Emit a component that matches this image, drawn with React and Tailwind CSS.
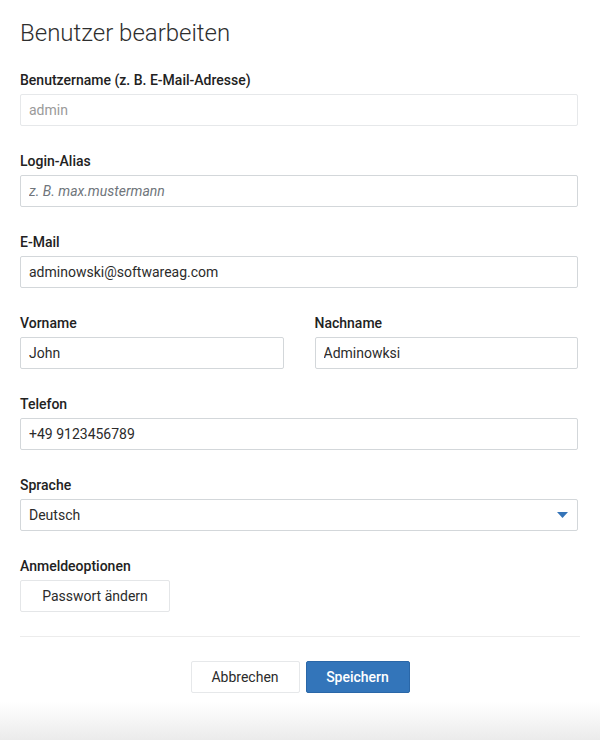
import React from "react";

const font = { fontFamily: "Roboto, 'Liberation Sans', sans-serif" };

function Field({ label, children, className = "" }) {
  return (
    <div className={"flex flex-col " + className}>
      <label className="text-sm leading-5 font-medium text-[#222] mb-1">{label}</label>
      {children}
    </div>
  );
}

function TextInput({ value, placeholder, disabled }) {
  return (
    <input
      type="text"
      defaultValue={value}
      placeholder={placeholder}
      disabled={disabled}
      className={
        "h-8 w-full rounded-[2px] border px-2 text-sm outline-none " +
        (disabled
          ? "border-[#e6e8ea] bg-white text-[#9a9a9a]"
          : "border-[#d3d7da] bg-white text-[#2b2b2b] placeholder:italic placeholder:text-[#6f757b]")
      }
    />
  );
}

export default function App() {
  return (
    <div className="flex h-[740px] w-[600px] flex-col bg-white" style={font}>
      <div className="px-5 pt-[17px]">
        <h1 className="text-2xl leading-8 font-light text-[#2e2e2e]">Benutzer bearbeiten</h1>

        <div className="mt-[21px] flex flex-col gap-[25px] pr-[2px]">
          <Field label="Benutzername (z. B. E-Mail-Adresse)">
            <TextInput value="admin" disabled />
          </Field>
          <Field label="Login-Alias">
            <TextInput placeholder="z. B. max.mustermann" />
          </Field>
          <Field label="E-Mail">
            <TextInput value="adminowski@softwareag.com" />
          </Field>
          <div className="grid grid-cols-2 gap-[31px]">
            <Field label="Vorname">
              <TextInput value="John" />
            </Field>
            <Field label="Nachname">
              <TextInput value="Adminowksi" />
            </Field>
          </div>
          <Field label="Telefon">
            <TextInput value="+49 9123456789" />
          </Field>
          <Field label="Sprache">
            <div className="flex h-8 w-full items-center justify-between rounded-[2px] border border-[#d3d7da] bg-white px-2 text-sm text-[#2b2b2b]">
              <span>Deutsch</span>
              <svg width="11" height="6" viewBox="0 0 11 6" className="mr-[1px]">
                <path d="M0 0 H11 L5.5 6 Z" fill="#3574b8" />
              </svg>
            </div>
          </Field>
          <Field label="Anmeldeoptionen">
            <button
              type="button"
              className="h-8 w-[150px] rounded-[2px] border border-[#e4e6e8] bg-white text-sm text-[#2b2b2b]"
            >
              Passwort ändern
            </button>
          </Field>
        </div>

        <div className="mt-6 border-t border-[#ececec]" />

        <div className="mt-6 flex justify-center gap-[6px]">
          <button
            type="button"
            className="h-8 w-[109px] rounded-[2px] border border-[#e6e8ea] bg-white text-sm text-[#2b2b2b]"
          >
            Abbrechen
          </button>
          <button
            type="button"
            className="h-8 w-[104px] rounded-[2px] border border-[#2a67a8] bg-[#3375ba] text-sm font-medium text-white"
          >
            Speichern
          </button>
        </div>
      </div>
      <div className="mt-auto h-[38px] bg-gradient-to-b from-white to-[#ebebeb]" />
    </div>
  );
}
